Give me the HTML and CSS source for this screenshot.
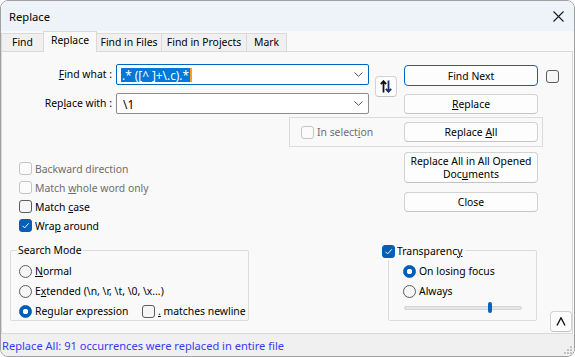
FILE: index.html
```html
<!DOCTYPE html>
<html>
<head>
<meta charset="utf-8">
<title>Replace</title>
<link rel="stylesheet" href="styles.css">
</head>
<body>
<div class="window">
  <div class="titlebar">
    <span class="title">Replace</span>
    <svg class="close" width="11" height="11" viewBox="0 0 11 11"><path d="M0.5 0.5L10.5 10.5M10.5 0.5L0.5 10.5" stroke="#1b1b1b" stroke-width="1.1" fill="none"/></svg>
  </div>
  <div class="tabs">
    <div class="tab w1">Find</div>
    <div class="tab w2 active">Replace</div>
    <div class="tab w3">Find in Files</div>
    <div class="tab w4">Find in Projects</div>
    <div class="tab w5">Mark</div>
  </div>
  <div class="panel">
    <div class="top">
      <label class="lbl row1"><u>F</u>ind what :</label>
      <div class="combo focus row1">
        <span class="sel">.* ([^ ]+\.c).*</span><span class="caret"></span>
        <svg class="chev" width="9" height="5" viewBox="0 0 9 5"><path d="M0.5 0.5L4.5 4.3L8.5 0.5" stroke="#505050" fill="none" stroke-width="1"/></svg>
      </div>
      <button class="btn swap">
        <svg width="12" height="13" viewBox="0 0 12 13"><path d="M3.5 12.5V1.5M0.8 4.2L3.5 1.2L6.2 4.2" stroke="#111" stroke-width="1.8" fill="none"/><path d="M8.5 0.5V11.5M5.8 8.8L8.5 11.8L11.2 8.8" stroke="#1c2f6e" stroke-width="1.8" fill="none"/></svg>
      </button>
      <button class="btn default row1 bcol">Find Next</button>
      <span class="chk row1 far"></span>
      <label class="lbl row2">Rep<u>l</u>ace with :</label>
      <div class="combo row2">
        <span class="val">\1</span>
        <svg class="chev" width="9" height="5" viewBox="0 0 9 5"><path d="M0.5 0.5L4.5 4.3L8.5 0.5" stroke="#505050" fill="none" stroke-width="1"/></svg>
      </div>
      <button class="btn row2 bcol short"><u>R</u>eplace</button>
      <div class="selgroup">
        <span class="opt disabled"><span class="chk dis"></span><span>In select<u>i</u>on</span></span>
        <button class="btn short rall">Replace <u>A</u>ll</button>
      </div>
    </div>
    <div class="mid">
      <div class="opts">
        <div class="opt disabled"><span class="chk dis"></span><span>Backward direction</span></div>
        <div class="opt disabled"><span class="chk dis"></span><span>Match <u>w</u>hole word only</span></div>
        <div class="opt"><span class="chk"></span><span>Match <u>c</u>ase</span></div>
        <div class="opt"><span class="chk on"><svg width="11" height="11" viewBox="0 0 11 11"><path d="M2.5 5.8L4.6 7.9L8.8 3.3" stroke="#fff" stroke-width="1" fill="none"/></svg></span><span>Wra<u>p</u> around</span></div>
      </div>
      <div class="btncol">
        <button class="btn big"><span class="ln">Replace All in All Opened</span><span class="ln">Doc<u>u</u>ments</span></button>
        <button class="btn short close-btn">Close</button>
      </div>
    </div>
    <div class="bottom">
      <div class="group search">
        <span class="legend">Search Mode</span>
        <div class="opt"><span class="radio"></span><span><u>N</u>ormal</span></div>
        <div class="opt"><span class="radio"></span><span>E<u>x</u>tended (\n, \r, \t, \0, \x...)</span></div>
        <div class="opt">
          <span class="regex"><span class="radio on"></span><span>Re<u>g</u>ular expression</span></span>
          <span class="chk"></span><span><u>.</u> matches newline</span>
        </div>
      </div>
      <div class="group transp">
        <span class="legend tlegend"><span class="chk on"><svg width="11" height="11" viewBox="0 0 11 11"><path d="M2.5 5.8L4.6 7.9L8.8 3.3" stroke="#fff" stroke-width="1" fill="none"/></svg></span><span>Transparenc<u>y</u></span></span>
        <div class="opt"><span class="radio on"></span><span>On losing focus</span></div>
        <div class="opt"><span class="radio"></span><span>Always</span></div>
        <div class="slider"><span class="thumb"></span></div>
      </div>
      <button class="btn up">
        <svg width="10" height="9" viewBox="0 0 10 9"><path d="M1 8.5L5 0.8L9 8.5" stroke="#111" stroke-width="1.4" fill="none"/></svg>
      </button>
    </div>
  </div>
  <div class="status">
    <span class="msg">Replace All: 91 occurrences were replaced in entire file</span>
    <svg class="grip" width="9" height="9" viewBox="0 0 9 9" fill="#c2c2c2"><rect x="6" y="0" width="2" height="2"/><rect x="3" y="3" width="2" height="2"/><rect x="6" y="3" width="2" height="2"/><rect x="0" y="6" width="2" height="2"/><rect x="3" y="6" width="2" height="2"/><rect x="6" y="6" width="2" height="2"/></svg>
  </div>
</div>
</body>
</html>
```
FILE: styles.css
```css
* { box-sizing: border-box; margin: 0; padding: 0; }
body {
  width: 575px; height: 357px; overflow: hidden; background: #ffffff;
  font-family: "Noto Sans", "Open Sans", sans-serif; font-size: 10.4px; color: #000;
}
u { text-decoration: underline; text-underline-offset: 1px; text-decoration-thickness: 1px; }
.window {
  width: 575px; height: 357px; border: 1px solid #a0a0a0; border-radius: 8px;
  background: #f9f9f9; overflow: hidden; display: flex; flex-direction: column;
}
.titlebar {
  height: 30px; flex: none; background: #eef2f9;
  display: flex; align-items: center; justify-content: space-between;
  padding: 0 10px 0 8px;
}
.title { font-size: 11.2px; }
.tabs { height: 20px; flex: none; display: flex; align-items: flex-end; position: relative; z-index: 2; }
.tab {
  height: 18px; background: #f0f0f0; border: 1px solid #d9d9d9; border-bottom: none;
  margin-right: -1px; text-align: center; line-height: 16px; white-space: nowrap;
}
.tab.active { height: 21px; background: #f9f9f9; margin-bottom: -1px; line-height: 17px; position: relative; z-index: 3; }
.w1 { width: 43px; }
.w2 { width: 54px; }
.w3 { width: 66px; }
.w4 { width: 86px; }
.w5 { width: 41px; }
.panel {
  height: 283px; flex: none; width: 572px; border: 1px solid #d9d9d9; background: #f9f9f9;
  display: flex; flex-direction: column;
}
.top {
  margin-top: 12px;
  display: grid;
  grid-template-columns: 114px 259px 29px 142px 13px;
  grid-template-rows: 29px 24px 30px;
  align-items: start;
}
.lbl { line-height: 21px; text-align: right; padding-right: 4px; grid-column: 1; white-space: nowrap; }
.row1 { grid-row: 1; }
.row2 { grid-row: 2; }
.combo {
  grid-column: 2; width: 253px; height: 21px; background: #fff; border: 1px solid #8c8c8c;
  border-radius: 2px; display: flex; align-items: center; padding-left: 4px; position: relative;
}
.combo.focus { border-color: #0067c0; }
.sel { background: #0078d7; color: #fff; line-height: 14px; padding: 0 1px; white-space: pre; font-size: 11.8px; }
.caret { width: 2px; height: 14px; background: #f0a030; }
.val { padding-left: 2px; font-size: 11.8px; }
.chev { position: absolute; right: 5px; top: 7px; }
.btn {
  font-family: inherit; font-size: 10.4px; color: #000; background: #fdfdfd;
  border: 1px solid #d2d2d2; border-bottom-color: #c4c4c4; border-radius: 4px;
  height: 21px; width: 134px; line-height: 14px; text-align: center; white-space: nowrap;
}
.btn svg { display: block; margin: 0 auto; }
.btn.default { border-color: #0067c0; }
.bcol { grid-column: 4; margin-top: 1px; }
.short { height: 20px; }
.swap { grid-column: 3; grid-row: 1 / 3; width: 22px; height: 21px; margin-top: 12px; }
.far { grid-column: 5; margin-top: 6px; }
.chk {
  display: inline-block; flex: none; width: 13px; height: 13px; border: 1px solid #5c5c5c;
  border-radius: 3px; background: #f6f6f6; margin-right: 3px;
}
.far { margin-right: 0; }
.chk.dis { border-color: #c4c4c4; background: #fbfbfb; }
.chk.on { background: #005fb8; border-color: #005fb8; display: flex; align-items: center; justify-content: center; }
.selgroup {
  grid-row: 3; grid-column: 2 / 5; margin-left: 173px; width: 254px; height: 30px;
  border: 1px solid #dcdcdc; display: flex; align-items: center; padding-left: 11px;
}
.rall { margin-left: auto; margin-right: 4px; }
.opt { display: flex; align-items: center; height: 19px; white-space: nowrap; }
.opt.disabled { color: #6d6d6d; }
.mid { height: 97px; flex: none; display: grid; grid-template-columns: 402px 134px; }
.opts { padding: 12px 0 0 17px; }
.btncol { padding-top: 5px; display: flex; flex-direction: column; }
.big { height: 31px; display: flex; flex-direction: column; align-items: center; justify-content: center; }
.ln { display: block; line-height: 13px; }
.close-btn { margin-top: 9px; }
.bottom { height: 87px; flex: none; display: flex; align-items: flex-start; }
.group {
  position: relative; height: 71px; margin-top: 6px; border: 1px solid #dcdcdc; border-radius: 2px;
}
.group .opt { height: 20px; }
.search { margin-left: 8px; width: 239px; padding: 10px 0 0 8px; }
.legend {
  position: absolute; top: -9px; left: 6px; background: #f9f9f9; padding: 0 1px; line-height: 17px; white-space: nowrap;
}
.radio {
  display: inline-block; flex: none; width: 13px; height: 13px; border-radius: 50%;
  border: 1px solid #5c5c5c; background: #f6f6f6; margin-right: 3px;
}
.radio.on { border-color: #005fb8; background: radial-gradient(circle, #fff 0 2.4px, #005fb8 3px); }
.regex { display: flex; align-items: center; width: 123px; flex: none; }
.transp { margin-left: 139px; width: 149px; padding: 10px 0 0 14px; }
.tlegend { top: -8px; left: -7px; display: flex; align-items: center; padding: 0 3px 0 0; }
.tlegend .chk { margin-right: 2px; }
.slider {
  position: relative; margin: 5px 0 0 1px; width: 118px; height: 4px;
  background: #e6e6e6; border: 1px solid #d4d4d4; border-radius: 2px;
}
.thumb {
  position: absolute; left: 83px; top: -5px; width: 4px; height: 11px; background: #0067c0; border-radius: 2px;
}
.up { width: 22px; height: 21px; margin: 67px 0 0 13px; }
.status {
  flex: 1; display: flex; justify-content: space-between; align-items: center;
  padding: 0 1px 0 1px; background: #f0f0f0; position: relative;
}
.msg { color: #3a3af5; font-size: 11.1px; }
.grip { align-self: flex-end; margin-bottom: 1px; }
```
